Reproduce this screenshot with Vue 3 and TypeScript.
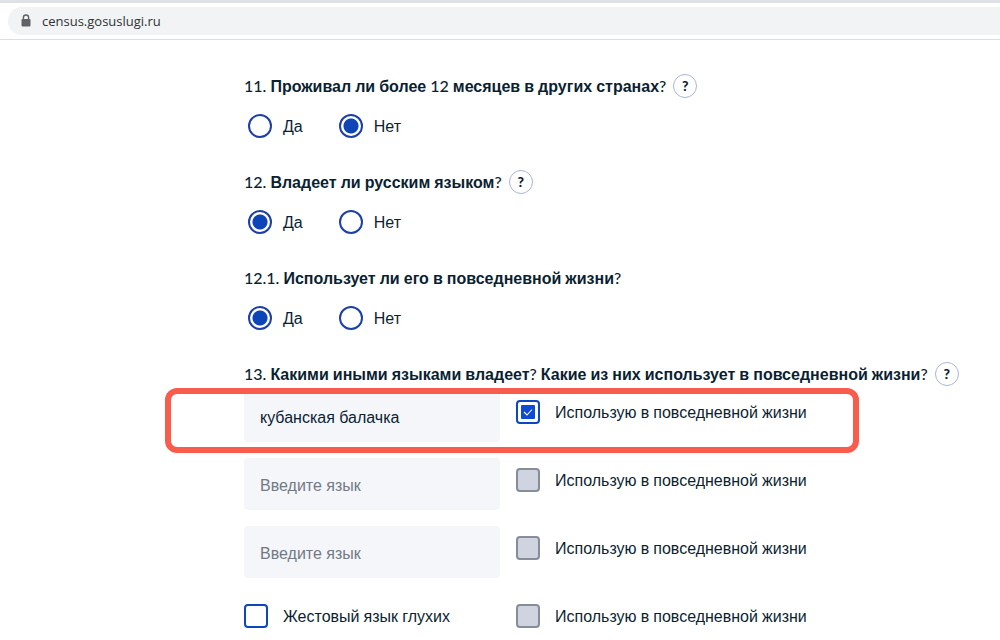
<script setup lang="ts">
import { h, reactive, ref } from 'vue'
import type { FunctionalComponent } from 'vue'

interface Question {
  id: string
  text: string
  help: boolean
  answer: string
}

interface Language {
  name: string
  daily: boolean
}

// Cyrillic words are set in the sans face; digits, punctuation and spaces in Lato.
const MixedText: FunctionalComponent<{ text: string }> = ({ text }) =>
  h(
    'span',
    (text.match(/[А-Яа-яЁё]+|[^А-Яа-яЁё]+/g) ?? []).map((run) =>
      /[А-Яа-яЁё]/.test(run) ? h('span', { class: 'cyrillic' }, run) : run,
    ),
  )
MixedText.props = ['text']

const answers: string[] = ['Да', 'Нет']

const questions = reactive<Question[]>([
  { id: '11', text: '11. Проживал ли более 12 месяцев в других странах?', help: true, answer: 'Нет' },
  { id: '12', text: '12. Владеет ли русским языком?', help: true, answer: 'Да' },
  { id: '12-1', text: '12.1. Использует ли его в повседневной жизни?', help: false, answer: 'Да' },
])

const languages = reactive<Language[]>([
  { name: 'кубанская балачка', daily: true },
  { name: '', daily: false },
  { name: '', daily: false },
])

const signLanguage = ref(false)
const signDaily = ref(false)
</script>

<template>
  <div class="page">
    <header class="browser-bar">
      <div class="address">
        <svg class="lock" viewBox="0 0 10 14" aria-hidden="true">
          <path d="M2.4 6V3.6a2.6 2.6 0 0 1 5.2 0V6" fill="none" stroke="#5f6368" stroke-width="1.4" />
          <rect x="0.5" y="5" width="9" height="7.5" rx="1" fill="#5f6368" />
        </svg>
        <span>census.gosuslugi.ru</span>
      </div>
    </header>

    <main class="form">
      <section v-for="q in questions" :key="q.id" class="question" role="radiogroup" :aria-labelledby="`title-${q.id}`">
        <div class="heading">
          <h2 :id="`title-${q.id}`"><MixedText :text="q.text" /></h2>
          <button v-if="q.help" type="button" class="help">?</button>
        </div>
        <div class="options">
          <label v-for="a in answers" :key="a" class="option">
            <input v-model="q.answer" type="radio" :name="`question-${q.id}`" :value="a" />
            <MixedText :text="a" />
          </label>
        </div>
      </section>

      <section>
        <div class="heading">
          <h2><MixedText text="13. Какими иными языками владеет? Какие из них использует в повседневной жизни?" /></h2>
          <button type="button" class="help">?</button>
        </div>
        <div class="languages">
          <div v-for="(l, i) in languages" :key="i" class="row">
            <input v-model="l.name" type="text" class="field" placeholder="Введите язык" aria-label="Язык" />
            <label class="check">
              <input v-model="l.daily" type="checkbox" :disabled="!l.name" />
              <MixedText text="Использую в повседневной жизни" />
            </label>
            <div v-if="i === 0" class="marker"></div>
          </div>
          <div class="row">
            <label class="check">
              <input v-model="signLanguage" type="checkbox" />
              <MixedText text="Жестовый язык глухих" />
            </label>
            <label class="check">
              <input v-model="signDaily" type="checkbox" :disabled="!signLanguage" />
              <MixedText text="Использую в повседневной жизни" />
            </label>
          </div>
        </div>
      </section>
    </main>
  </div>
</template>

<style>
body {
  overflow: hidden;
}

.cyrillic {
  font-family: "Liberation Sans", Arial, sans-serif;
}

h2 .cyrillic {
  font-weight: 700;
}
</style>

<style scoped>
.page {
  background: #fff;
  color: #0b1f33;
  font: 16px/24px Lato, "Liberation Sans", Arial, sans-serif;
}

.browser-bar {
  padding: 4px 0 4px 8px;
  border-top: 3px solid #dee1e6;
  border-bottom: 1px solid #dcdee0;
}

.address {
  display: flex;
  align-items: center;
  gap: 11px;
  height: 28px;
  padding-left: 13px;
  border-radius: 14px 0 0 14px;
  background: #f1f3f4;
  color: #303236;
  font: 13px/28px "Open Sans", "Noto Sans", sans-serif;
}

.lock {
  width: 10px;
  height: 14px;
}

.form {
  padding: 34px 24px 0 244px;
}

.question {
  margin-bottom: 32px;
}

.heading {
  display: flex;
  align-items: center;
  gap: 7px;
  height: 24px;
}

h2 {
  margin: 0;
  font-size: 16px;
  line-height: 24px;
  font-weight: 500;
  white-space: nowrap;
}

.help {
  flex: none;
  width: 24px;
  height: 24px;
  padding: 0;
  border: 1px solid #a9b5d9;
  border-radius: 50%;
  background: #fff;
  color: #0b1f33;
  font: 900 14px/22px Lato, "Liberation Sans", sans-serif;
}

.options {
  display: flex;
  gap: 36px;
  margin-top: 16px;
  padding-left: 4px;
}

.option,
.check {
  display: flex;
  align-items: center;
  gap: 11px;
  height: 24px;
  white-space: nowrap;
}

.row .check {
  gap: 15px;
  margin-top: 10px;
}

input[type="radio"],
input[type="checkbox"] {
  appearance: none;
  flex: none;
  box-sizing: border-box;
  width: 24px;
  height: 24px;
  margin: 0;
  border: 2px solid #0d47bf;
  background: #fff;
}

input[type="radio"] {
  border-color: #1e3fa8;
  border-radius: 50%;
}

input[type="radio"]:checked {
  background: radial-gradient(circle, #0d45b8 0 7px, #fff 8px);
}

input[type="checkbox"] {
  border-radius: 4px;
}

input[type="checkbox"]:checked {
  background: #fff url("data:image/svg+xml,%3Csvg xmlns='http://www.w3.org/2000/svg' viewBox='0 0 20 20'%3E%3Crect x='3' y='3' width='14' height='14' rx='1' fill='%230d4cd3'/%3E%3Cpath d='M6 10l3 3 5-5.5' fill='none' stroke='%23fff' stroke-width='1.1'/%3E%3C/svg%3E") center / 20px 20px no-repeat;
}

input[type="checkbox"]:disabled {
  border-color: #868c98;
  background: #d0d4e0;
}

.languages {
  display: grid;
  gap: 16px;
  justify-content: start;
  margin-top: 4px;
}

.row {
  position: relative;
  display: grid;
  grid-template-columns: 256px auto;
  column-gap: 16px;
  align-items: start;
  min-height: 52px;
}

.field {
  box-sizing: border-box;
  width: 100%;
  height: 52px;
  padding: 3px 16px 0;
  border: 0;
  border-radius: 4px;
  background: #f5f6fa;
  color: #0b1f33;
  font-family: "Liberation Sans", Arial, sans-serif;
  font-size: 16px;
}

.field::placeholder {
  color: #727a85;
  opacity: 1;
}

.marker {
  position: absolute;
  inset: -2px -52px -11px -79px;
  border: 6px solid #f95b4c;
  border-radius: 12px;
  pointer-events: none;
}
</style>
